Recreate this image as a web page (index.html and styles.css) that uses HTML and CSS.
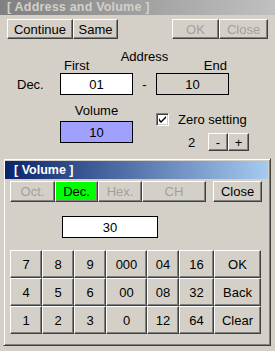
FILE: index.html
```html
<!DOCTYPE html>
<html>
<head>
<meta charset="utf-8">
<link rel="stylesheet" href="styles.css">
</head>
<body>
<div class="win">
  <div class="titlebar">[ Address and Volume ]</div>
  <div class="toolbar">
    <button class="btn w-continue">Continue</button>
    <button class="btn w-same">Same</button>
    <div class="spacer"></div>
    <button class="btn w-ok dis">OK</button>
    <button class="btn w-close dis">Close</button>
  </div>
  <div class="addr">
    <div class="addr-title">Address</div>
    <div class="addr-first">First</div>
    <div class="addr-end">End</div>
    <div class="addr-dec">Dec.</div>
    <div class="field white">01</div>
    <div class="addr-dash">-</div>
    <div class="field gray">10</div>
  </div>
  <div class="volrow">
    <div class="volcol">
      <div class="vol-label">Volume</div>
      <div class="field blue">10</div>
    </div>
    <div class="zerocol">
      <div class="zero-check">
        <span class="checkbox">
          <svg width="7" height="7" viewBox="0 0 7 7"><path d="M0 2 L0 5 L2 7 L7 2 L7 0 L2 5 Z" fill="#000"/></svg>
        </span>
        <span>Zero setting</span>
      </div>
      <div class="zero-step">
        <span class="zero-num">2</span>
        <button class="btn w-pm">-</button>
        <button class="btn w-pm2">+</button>
      </div>
    </div>
  </div>
  <div class="panel">
    <div class="panel-head">[ Volume ]</div>
    <div class="tabs">
      <button class="btn w-oct dis">Oct.</button>
      <button class="btn w-dec green">Dec.</button>
      <button class="btn w-hex dis">Hex.</button>
      <button class="btn w-ch dis">CH</button>
      <div class="spacer"></div>
      <button class="btn w-pclose">Close</button>
    </div>
    <div class="display">30</div>
    <div class="keypad">
      <button class="btn key">7</button>
      <button class="btn key">8</button>
      <button class="btn key">9</button>
      <button class="btn key">000</button>
      <button class="btn key">04</button>
      <button class="btn key">16</button>
      <button class="btn key">OK</button>
      <button class="btn key">4</button>
      <button class="btn key">5</button>
      <button class="btn key">6</button>
      <button class="btn key">00</button>
      <button class="btn key">08</button>
      <button class="btn key">32</button>
      <button class="btn key">Back</button>
      <button class="btn key">1</button>
      <button class="btn key">2</button>
      <button class="btn key">3</button>
      <button class="btn key">0</button>
      <button class="btn key">12</button>
      <button class="btn key">64</button>
      <button class="btn key">Clear</button>
    </div>
  </div>
</div>
</body>
</html>
```
FILE: styles.css
```css
* { box-sizing: border-box; }
html, body { margin: 0; padding: 0; }
body {
  background: #d4d0c8;
  font-family: "Liberation Sans", Arial, sans-serif;
  font-size: 13px;
  color: #000;
}
.win {
  width: 275px;
  height: 351px;
  overflow: hidden;
}
.titlebar {
  height: 15px;
  line-height: 15px;
  padding-left: 7px;
  background: linear-gradient(to right, #808080, #c0c0c0);
  color: #d4d0c8;
  font-weight: bold;
  font-size: 12.5px;
  letter-spacing: 0.2px;
  white-space: nowrap;
}
.btn {
  display: flex;
  align-items: center;
  justify-content: center;
  margin: 0;
  padding: 0;
  background: #d4d0c8;
  border: 1px solid;
  border-color: #fff #404040 #404040 #fff;
  box-shadow: inset -1px -1px #808080;
  font-family: "Liberation Sans", Arial, sans-serif;
  font-size: 13px;
  color: #000;
  line-height: 1;
}
.btn.dis { color: #a0a0a0; }
.btn.green { background: #00ff00; }
.spacer { flex: 1; }
.toolbar {
  display: flex;
  height: 20px;
  margin: 4px 7px 0 7px;
}
.toolbar .btn { height: 20px; }
.w-continue { width: 66px; }
.w-same { width: 45px; }
.w-ok { width: 47px; }
.w-close { width: 49px; }

.addr {
  display: grid;
  grid-template-columns: 43px 73px 23px 73px;
  grid-template-rows: 9px 14px 22px;
  margin: 11px 0 0 17px;
  line-height: 13px;
}
.addr-title {
  grid-column: 2 / 5;
  grid-row: 1;
  text-align: center;
  white-space: nowrap;
}
.addr-first { grid-column: 2; grid-row: 2; padding-left: 4px; }
.addr-end { grid-column: 4; grid-row: 2; text-align: right; padding-right: 2px; }
.addr-dec { grid-column: 1; grid-row: 3; align-self: center; }
.addr-dash { grid-column: 3; grid-row: 3; align-self: center; text-align: center; }
.field {
  height: 22px;
  border: 1px solid #000;
  display: flex;
  align-items: center;
  justify-content: center;
}
.addr .field { grid-row: 3; }
.field.white { background: #fff; }
.field.gray { background: #d4d0c8; }
.field.blue { background: #a0a0ff; }

.volrow {
  display: flex;
  margin: 9px 0 0 60px;
  height: 54px;
}
.volcol { width: 73px; }
.vol-label {
  height: 17px;
  line-height: 13px;
  text-align: center;
}
.zerocol {
  margin-left: 23px;
  padding-top: 9px;
}
.zero-check {
  display: flex;
  align-items: center;
  height: 13px;
  gap: 9px;
}
.checkbox {
  width: 13px;
  height: 13px;
  background: #fff;
  border: 1px solid;
  border-color: #808080 #fff #fff #808080;
  box-shadow: inset 1px 1px #404040, inset -1px -1px #d4d0c8;
  display: flex;
  align-items: center;
  justify-content: center;
}
.zero-step {
  display: flex;
  align-items: center;
  height: 18px;
  margin-top: 7px;
  padding-left: 32px;
}
.zero-num { width: 20px; }
.zero-step .btn { height: 18px; }
.w-pm { width: 20px; }
.w-pm2 { width: 21px; }

.panel {
  margin: 0 4px 0 3px;
  height: 188px;
  border: 1px solid;
  border-color: #d4d0c8 #404040 #404040 #d4d0c8;
  box-shadow: inset 1px 1px #fff, inset -1px -1px #808080;
  padding: 2px 2px 0 1px;
}
.panel-head {
  height: 18px;
  line-height: 18px;
  padding-left: 9px;
  background: linear-gradient(to right, #0a246a, #a6caf0);
  color: #fff;
  font-weight: bold;
  font-size: 12.5px;
}
.tabs {
  display: flex;
  height: 21px;
  margin: 2px 6px 0 5px;
}
.tabs .btn { height: 21px; }
.w-oct { width: 45px; }
.w-dec { width: 43px; }
.w-hex { width: 44px; }
.w-ch { width: 64px; }
.w-pclose { width: 49px; }
.display {
  width: 96px;
  height: 22px;
  margin: 14px 0 0 57px;
  background: #fff;
  border: 1px solid #000;
  display: flex;
  align-items: center;
  justify-content: center;
}
.keypad {
  display: grid;
  grid-template-columns: 32px 32px 32px 41px 32px 35px 47px;
  grid-template-rows: 28px 28px 28px;
  margin: 12px 0 0 5px;
}
.key { height: 28px; }
```
